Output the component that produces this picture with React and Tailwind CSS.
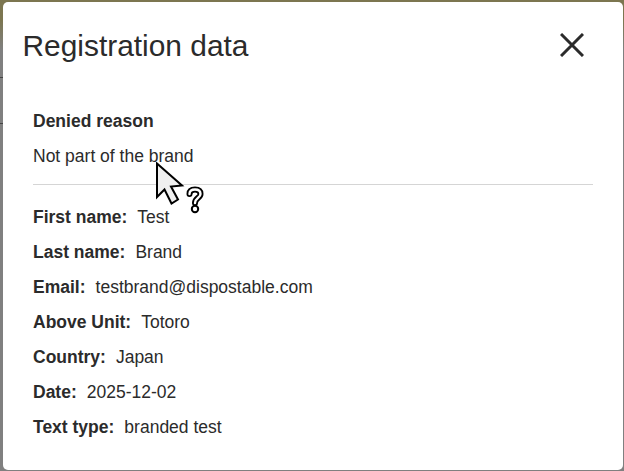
const rows = [
  ["First name:", "Test"],
  ["Last name:", "Brand"],
  ["Email:", "testbrand@dispostable.com"],
  ["Above Unit:", "Totoro"],
  ["Country:", "Japan"],
  ["Date:", "2025-12-02"],
  ["Text type:", "branded test"],
];

function Cursor() {
  const q = "M35.5 32 C35.5 28.5 37.8 27.5 41 27.5 C44.4 27.5 46.5 29 46.5 32 C46.5 36 41 36 41 41";
  return (
    <svg className="absolute left-[154px] top-[162px] pointer-events-none" width="52" height="54" viewBox="0 0 52 54">
      <path d="M3 1.5 L3 35 L10.5 27.5 L17.5 41.5 L24 37.5 L17 24.5 L28 23.5 Z" fill="#f0f0f0" stroke="#000" strokeWidth="2" strokeLinejoin="miter" />
      <path d={q} fill="none" stroke="#000" strokeWidth="6" strokeLinecap="round" />
      <circle cx="41" cy="47" r="3.2" fill="#fff" stroke="#000" strokeWidth="2" />
      <path d={q} fill="none" stroke="#fff" strokeWidth="2.4" strokeLinecap="round" />
    </svg>
  );
}

export default function App() {
  return (
    <div className="relative w-[624px] h-[471px] overflow-hidden bg-[#808080] font-['Liberation_Sans',Arial,sans-serif] text-[#2b2b2b]">
      <div className="absolute inset-x-0 top-0 h-[50px] bg-gradient-to-b from-[#7c7650] from-40% to-[#808080]" />
      <div className="absolute left-0 top-[77px] h-px w-[3px] bg-[#444444]" />
      <div className="absolute left-0 top-[123px] h-px w-[3px] bg-[#444444]" />
      <div className="relative mt-[2px] ml-[3px] h-[468px] w-[620px] rounded-[5px] bg-white">
        <header className="flex h-[84px] items-start justify-between pl-[19.5px] pr-[39px] pt-[26px]">
          <h1 className="text-[29.9px] leading-[35px] font-normal">Registration data</h1>
          <svg className="mt-[5px]" width="24" height="24" viewBox="0 0 24 24" fill="none" stroke="#2b2b2b" strokeWidth="3">
            <path d="M1 1 L23 23 M23 1 L1 23" />
          </svg>
        </header>
        <main className="px-[30px] pt-[23px] text-[17.5px] leading-[24px]">
          <p className="font-bold">Denied reason</p>
          <p className="mt-[11px]">Not part of the brand</p>
          <hr className="mt-[16px] mb-[20px] border-0 border-t border-[#d5d5d5]" />
          <div className="flex flex-col gap-[11px]">
            {rows.map(([k, v]) => (
              <div key={k} className="flex gap-[10px]">
                <span className="font-bold">{k}</span>
                <span>{v}</span>
              </div>
            ))}
          </div>
        </main>
      </div>
      <Cursor />
    </div>
  );
}
